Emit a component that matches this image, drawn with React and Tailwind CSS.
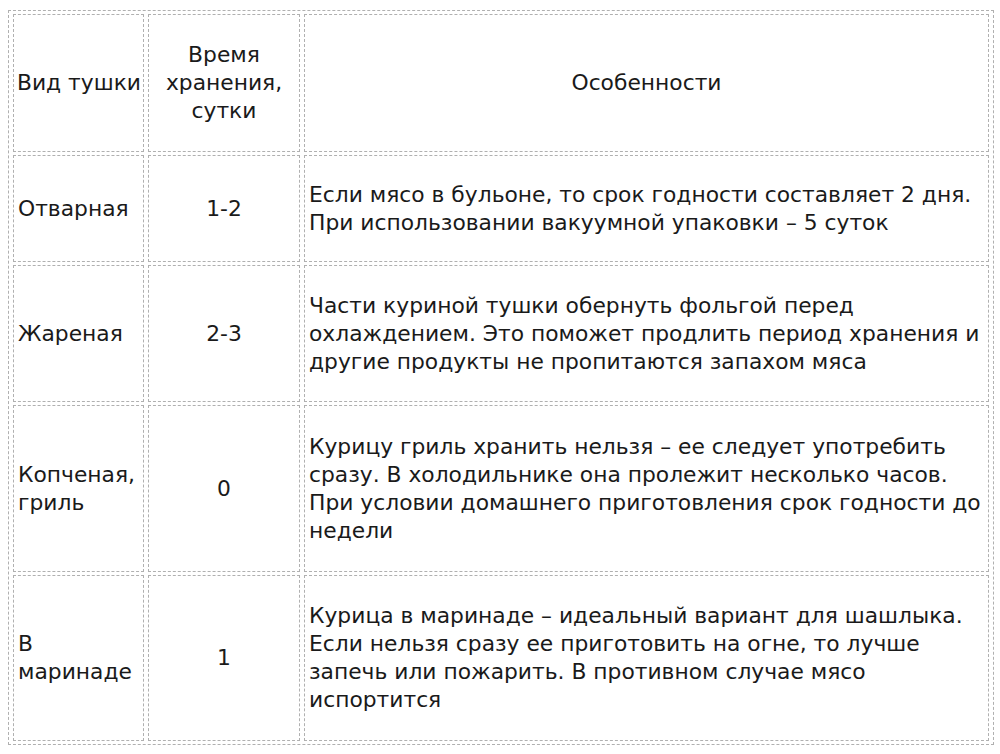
import React from "react";

const rows = [
  {
    h: "h-[107px]",
    name: "Отварная",
    time: "1-2",
    text: "Если мясо в бульоне, то срок годности составляет 2 дня. При использовании вакуумной упаковки – 5 суток",
  },
  {
    h: "h-[137px]",
    name: "Жареная",
    time: "2-3",
    text: "Части куриной тушки обернуть фольгой перед охлаждением. Это поможет продлить период хранения и другие продукты не пропитаются запахом мяса",
  },
  {
    h: "h-[167px]",
    name: "Копченая, гриль",
    time: "0",
    text: "Курицу гриль хранить нельзя – ее следует употребить сразу. В холодильнике она пролежит несколько часов. При условии домашнего приготовления срок годности до недели",
  },
  {
    h: "h-[166px]",
    name: "В маринаде",
    time: "1",
    text: "Курица в маринаде – идеальный вариант для шашлыка. Если нельзя сразу ее приготовить на огне, то лучше запечь или пожарить. В противном случае мясо испортится",
  },
];

const cell = "border border-dashed border-[#b0b0b0] align-middle p-0";

export default function App() {
  return (
    <div className="w-[1000px] h-[754px] bg-white overflow-hidden pt-[10px] pl-[8px] text-[#1a1a1a] [font-family:'DejaVu_Sans',Verdana,sans-serif] text-[21.8px] leading-[28px]">
      <table className="table-fixed border-separate border-spacing-x-[4px] border-spacing-y-[3px] border border-dashed border-[#b0b0b0] w-[986px]">
        <colgroup>
          <col className="w-[131px]" />
          <col className="w-[152px]" />
          <col className="w-[685px]" />
        </colgroup>
        <tbody>
          <tr className="h-[138px]">
            <td className={`${cell} pl-[3px] text-left font-normal`}>Вид тушки</td>
            <td className={`${cell} text-center px-[4px]`}>Время хранения, сутки</td>
            <td className={`${cell} text-center`}>Особенности</td>
          </tr>
          {rows.map((r) => (
            <tr key={r.name} className={r.h}>
              <td className={`${cell} pl-[4px] pr-[2px] text-left`}>{r.name}</td>
              <td className={`${cell} text-center`}>{r.time}</td>
              <td className={`${cell} pl-[4px] pr-[2px] text-left`}>{r.text}</td>
            </tr>
          ))}
        </tbody>
      </table>
    </div>
  );
}
